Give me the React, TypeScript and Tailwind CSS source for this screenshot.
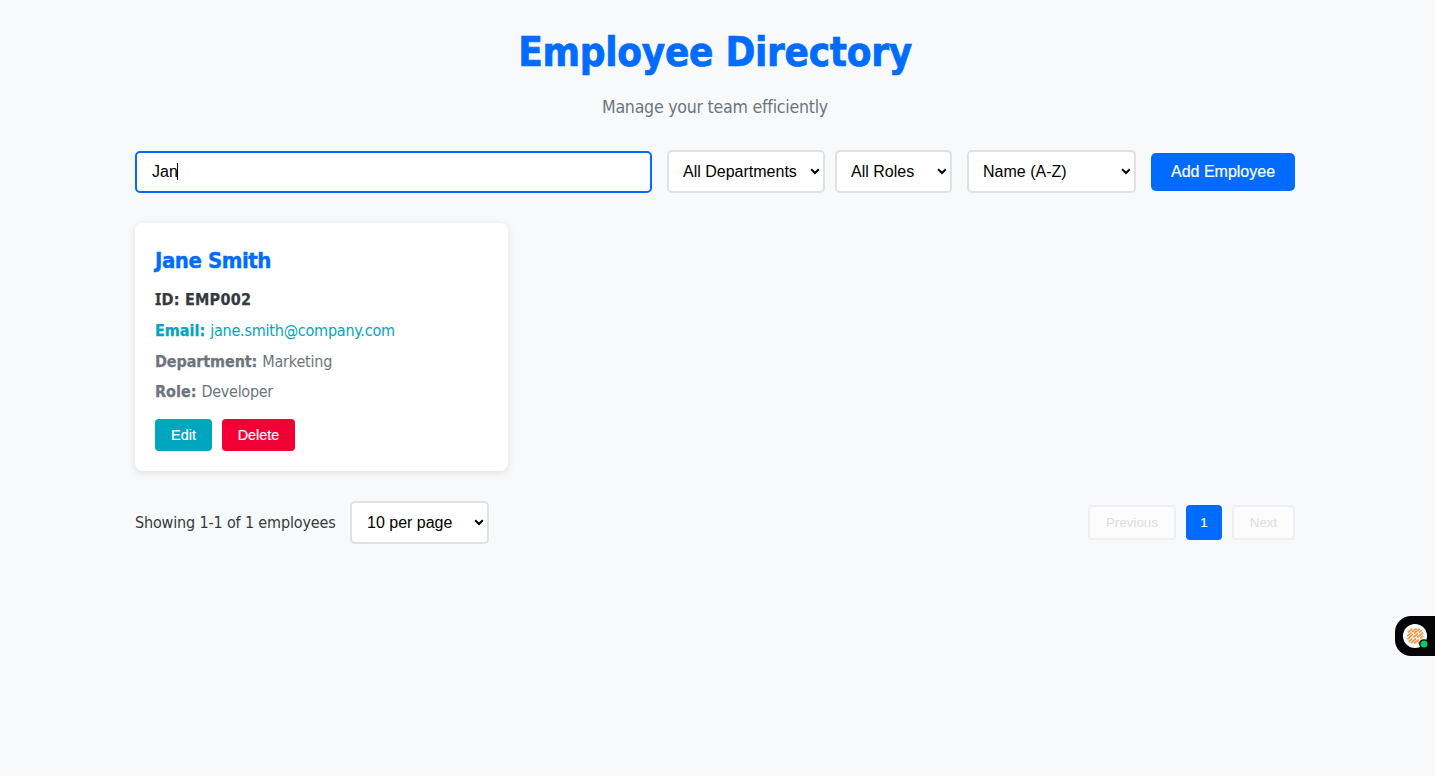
import type { ReactNode } from "react";

const sans = "font-['DejaVu_Sans_Condensed','DejaVu_Sans',sans-serif]";
const arial = "font-['Liberation_Sans',Arial,sans-serif]";

function Select({ label, className }: { label: string; className: string }) {
  return (
    <button
      type="button"
      className={`${arial} ${className} flex h-[43px] shrink-0 items-center justify-between rounded-[5px] border-2 border-[#dee2e6] bg-white pr-[3px] text-base text-black`}
    >
      <span className="whitespace-nowrap">{label}</span>
      <svg width="10" height="7" viewBox="0 0 10 7" fill="none" className="shrink-0">
        <path d="M1.2 1.3 5 5 8.8 1.3" stroke="#000" strokeWidth="2" />
      </svg>
    </button>
  );
}

function Field({ label, labelClass, children }: { label: string; labelClass: string; children: ReactNode }) {
  return (
    <p className="flex gap-[5px] whitespace-nowrap text-base leading-[23px]">
      <strong className={`${labelClass} font-bold [-webkit-text-stroke:0.25px]`}>{label}</strong>
      {children}
    </p>
  );
}

export default function App() {
  return (
    <div className={`${sans} relative h-screen overflow-hidden bg-[#f8f9fb] pl-[135px] pr-[140px] pt-5 text-[#343a40]`}>
      <header className="flex flex-col items-center">
        <h1 className="whitespace-nowrap text-[40px] font-bold leading-[64px] tracking-[-0.27px] text-[#006cff] [-webkit-text-stroke:0.7px]">Employee Directory</h1>
        <p className="mt-[9px] whitespace-nowrap text-[17.6px] leading-[28px] tracking-[-0.24px] text-[#6c757d]">Manage your team efficiently</p>
      </header>

      <div className="mt-[29px] flex h-[43px] items-center">
        <div className={`${arial} mt-px flex h-[42px] w-[517px] items-center rounded-[5px] border-2 border-[#006cff] bg-white px-[15px] text-base text-black`}>
          <span>Jan</span>
          <span className="-ml-px mb-px h-[17px] w-px bg-black" />
        </div>
        <Select label="All Departments" className="ml-[15px] w-[158px] pl-[14px]" />
        <Select label="All Roles" className="ml-[10px] w-[117px] pl-[14px]" />
        <Select label="Name (A-Z)" className="ml-[15px] w-[169px] pl-[14px]" />
        <button type="button" className={`${arial} ml-[15px] h-[38px] w-[144px] whitespace-nowrap rounded-[5px] bg-[#006cff] text-base text-white [-webkit-text-stroke:0.2px]`}>
          Add Employee
        </button>
      </div>

      <section className="mt-[30px] h-[248px] w-[373px] rounded-lg bg-white p-5 shadow-[0_2px_8px_rgba(0,0,0,0.1)]">
        <h2 className="whitespace-nowrap text-[22px] font-bold leading-[36px] tracking-[-0.44px] text-[#006cff] [-webkit-text-stroke:0.4px]">Jane Smith</h2>
        <div className="mt-[9px] flex flex-col">
          <p className="whitespace-nowrap text-base font-bold leading-[23px] tracking-[0.25px] [-webkit-text-stroke:0.25px]">
            <span className="font-['Noto_Sans']">I</span>D: EMP002
          </p>
          <div className="mt-2 text-[#00a5bf]">
            <Field label="Email:" labelClass="">
              <span className="tracking-[-0.22px]">jane.smith@company.com</span>
            </Field>
          </div>
          <div className="mt-2 text-[#6c757d]">
            <Field label="Department:" labelClass="tracking-[-0.1px]">
              <span className="tracking-[-0.2px]">Marketing</span>
            </Field>
          </div>
          <div className="mt-[7px] text-[#6c757d]">
            <Field label="Role:" labelClass="">
              <span className="tracking-[-0.28px]">Developer</span>
            </Field>
          </div>
        </div>
        <div className={`${arial} mt-4 flex gap-[10px] text-[14.4px] text-white [-webkit-text-stroke:0.2px]`}>
          <button type="button" className="h-8 w-[57px] rounded-[4px] bg-[#00a5bf] pt-px">Edit</button>
          <button type="button" className="h-8 w-[73px] rounded-[4px] bg-[#f00034] pt-px">Delete</button>
        </div>
      </section>

      <footer className="mt-[30px] flex h-[43px] items-center justify-between">
        <div className="flex items-center">
          <span className="w-[215px] whitespace-nowrap text-base tracking-[-0.15px]">Showing 1-1 of 1 employees</span>
          <Select label="10 per page" className="w-[139px] pl-[15px]" />
        </div>
        <nav className={`${arial} flex gap-[10px] text-[13.33px]`}>
          <button type="button" disabled className="h-[35px] w-[88px] rounded-[4px] border-2 border-[#edeff2] bg-[#fcfcfd] text-[#dcdcdc]">Previous</button>
          <button type="button" className="h-[35px] w-9 rounded-[4px] bg-[#006cff] text-white [-webkit-text-stroke:0.2px]">1</button>
          <button type="button" disabled className="h-[35px] w-[63px] rounded-[4px] border-2 border-[#edeff2] bg-[#fcfcfd] text-[#dcdcdc]">Next</button>
        </nav>
      </footer>

      <div className="absolute right-0 top-[616px] h-10 w-10 rounded-l-[16px] bg-[#050507] pl-2 pt-2">
        <svg width="28" height="28" viewBox="0 0 28 28">
          <circle cx="12" cy="12" r="12" fill="#fff" />
          <g stroke="#f69443" strokeWidth="1.7" strokeLinecap="round">
            <path d="M5.5 8 9 5.2" />
            <path d="M4.7 11.7 8 9M9.8 7.5 13 5" />
            <path d="M4.8 14.8 9.5 10.7M11.5 9 16.2 5.2" />
            <path d="M6.3 17 8.8 14.8M10.8 13 14.5 9.8M16.4 8.2 18.3 6.7" />
            <path d="M8.5 18.5 12.5 15M14.5 13.2 19.6 9" />
            <path d="M11.7 19 15.5 15.8M17.3 14.2 19.7 12.2" />
            <path d="M15.5 19 18.7 16.2" />
          </g>
          <circle cx="21" cy="20" r="4.2" fill="#00cc66" stroke="#050507" strokeWidth="1.3" />
        </svg>
      </div>
    </div>
  );
}
